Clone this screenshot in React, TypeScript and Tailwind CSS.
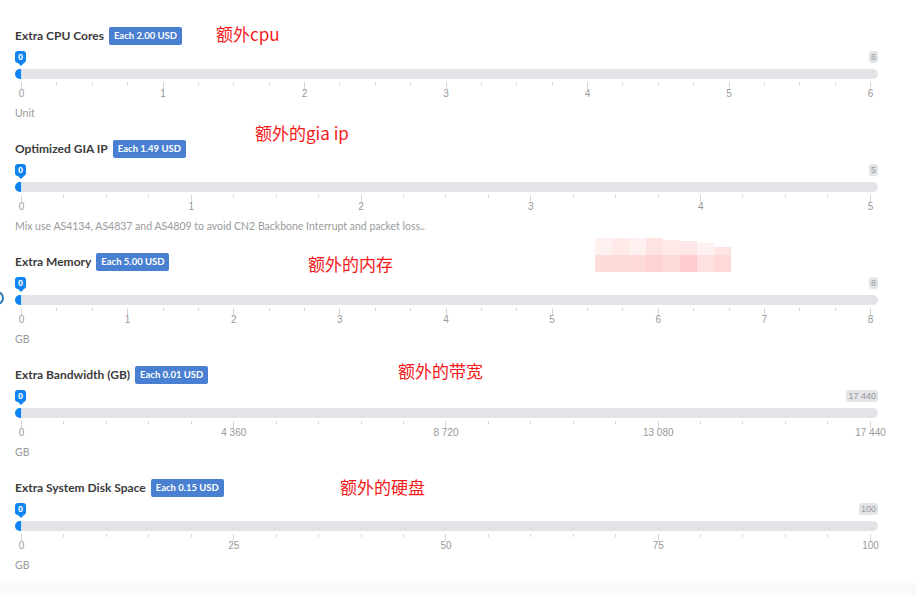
import React from "react";

type SliderProps = {
  maxLabel: string;
  labels: string[];
  intervals: number;
};

function Slider({ maxLabel, labels, intervals }: SliderProps) {
  const ticks = Array.from({ length: intervals + 1 }, (_, i) => i);
  const majorEvery = intervals / (labels.length - 1);
  return (
    <div className="flex flex-col w-[863px] mt-[5px] font-['Liberation_Sans',Arial,sans-serif]">
      {/* bubbles row */}
      <div className="flex justify-between items-start h-[12px]">
        <div className="relative h-[12px] min-w-[11px] px-[2px] rounded-[3px] bg-[#0d84f2] text-white text-[9px] font-bold leading-[12px] text-center">
          0
          <div className="absolute left-1/2 -translate-x-1/2 top-full w-0 h-0 border-l-[3px] border-r-[3px] border-t-[3px] border-l-transparent border-r-transparent border-t-[#0d84f2]" />
        </div>
        <div className="h-[12px] px-[2px] rounded-[3px] bg-[#e2e4e8] text-[#999] text-[9px] leading-[12px]">
          {maxLabel}
        </div>
      </div>
      {/* track */}
      <div className="mt-[6px] flex h-[10px] rounded-[5px] bg-[#e2e4e8] overflow-hidden">
        <div className="w-[6px] h-full bg-[#0d84f2]" />
        <div className="w-[1px] h-full bg-[#cfe4fb]" />
      </div>
      {/* ticks */}
      <div className="mt-[3px] flex justify-between items-start pl-[6px] pr-[7px] h-[6px]">
        {ticks.map((t) =>
          t % majorEvery === 0 ? (
            <div key={t} className="w-[1px] h-[7px] bg-[#d5d5d5]" />
          ) : (
            <div key={t} className="w-[1px] h-[3px] bg-[#d5d5d5]" />
          )
        )}
      </div>
      {/* labels */}
      <div className="flex justify-between pl-[6px] pr-[7px] h-[11px]">
        {labels.map((l, i) => (
          <div key={l + i} className="w-[1px] flex justify-center">
            <span className="text-[10px] leading-[11px] text-[#999] whitespace-nowrap">{l}</span>
          </div>
        ))}
      </div>
    </div>
  );
}

type SectionProps = {
  title: string;
  price: string;
  slider: SliderProps;
  note: string;
};

function Section({ title, price, slider, note }: SectionProps) {
  return (
    <div className="h-[113px] shrink-0 flex flex-col font-['Lato','Noto_Sans',sans-serif]">
      <div className="flex items-center h-[20px] gap-[5px]">
        <span className="text-[12px] font-bold text-[#3b3b3b]">{title}</span>
        <span className="h-[18px] px-[5px] rounded-[2px] bg-[#4a80d2] text-white text-[9.5px] font-bold leading-[18px]">
          {price}
        </span>
      </div>
      <Slider {...slider} />
      <div className="mt-[7px] text-[10.5px] leading-[14px] text-[#9a9a9a]">{note}</div>
    </div>
  );
}

const sections: SectionProps[] = [
  {
    title: "Extra CPU Cores",
    price: "Each 2.00 USD",
    slider: { maxLabel: "6", labels: ["0", "1", "2", "3", "4", "5", "6"], intervals: 24 },
    note: "Unit",
  },
  {
    title: "Optimized GIA IP",
    price: "Each 1.49 USD",
    slider: { maxLabel: "5", labels: ["0", "1", "2", "3", "4", "5"], intervals: 20 },
    note: "Mix use AS4134, AS4837 and AS4809 to avoid CN2 Backbone Interrupt and packet loss..",
  },
  {
    title: "Extra Memory",
    price: "Each 5.00 USD",
    slider: { maxLabel: "8", labels: ["0", "1", "2", "3", "4", "5", "6", "7", "8"], intervals: 24 },
    note: "GB",
  },
  {
    title: "Extra Bandwidth (GB)",
    price: "Each 0.01 USD",
    slider: { maxLabel: "17 440", labels: ["0", "4 360", "8 720", "13 080", "17 440"], intervals: 20 },
    note: "GB",
  },
  {
    title: "Extra System Disk Space",
    price: "Each 0.15 USD",
    slider: { maxLabel: "100", labels: ["0", "25", "50", "75", "100"], intervals: 20 },
    note: "GB",
  },
];

const mosaic = [
  { top: "bg-[#fff1f0] mt-[1px]", bottom: "bg-[#ffdcdc]" },
  { top: "bg-[#ffe9e9] mt-[1px]", bottom: "bg-[#ffdcdc]" },
  { top: "bg-[#fff1f0] mt-[1px]", bottom: "bg-[#ffdada]" },
  { top: "bg-[#ffe3e3] mt-[1px]", bottom: "bg-[#ffd3d3]" },
  { top: "bg-[#ffe9e9] mt-[3px]", bottom: "bg-[#ffdcdc]" },
  { top: "bg-[#ffe6e6] mt-[4px]", bottom: "bg-[#ffcdcd]" },
  { top: "bg-[#fff1f1] mt-[6px]", bottom: "bg-[#ffe1e1]" },
  { top: "bg-[#ffe4e4] mt-[10px]", bottom: "bg-[#ffd8d8]" },
];

const redText = "absolute text-[17px] leading-[24px] text-[#f41a1a] font-['Noto_Sans_CJK_SC','Noto_Sans',sans-serif]";

export default function App() {
  return (
    <div className="w-[916px] h-[595px] bg-[#f8f9fa] overflow-hidden">
      <div className="relative h-[583px] bg-white pl-[15px] pt-[26px] flex flex-col overflow-hidden">
        {sections.map((s) => (
          <Section key={s.title} {...s} />
        ))}

        {/* red annotations (overlaid on the screenshot) */}
        <div className={`${redText} left-[216px] top-[22px]`}>额外cpu</div>
        <div className={`${redText} left-[255px] top-[121px]`}>额外的gia ip</div>
        <div className={`${redText} left-[308px] top-[252px]`}>额外的内存</div>
        <div className={`${redText} left-[398px] top-[359px]`}>额外的带宽</div>
        <div className={`${redText} left-[340px] top-[475px]`}>额外的硬盘</div>

        {/* mosaic redaction overlay */}
        <div className="absolute left-[595px] top-[237px] flex">
          {mosaic.map((c, i) => (
            <div key={i} className="flex flex-col w-[17px]">
              <div className="h-[18px] flex flex-col">
                <div className={`flex-1 ${c.top}`} />
              </div>
              <div className={`h-[17px] ${c.bottom}`} />
            </div>
          ))}
        </div>

        {/* partial circle at left edge */}
        <div className="absolute left-[-10px] top-[291px] w-[14px] h-[14px] rounded-full border-[2px] border-[#2a78b4]" />
      </div>
    </div>
  );
}
